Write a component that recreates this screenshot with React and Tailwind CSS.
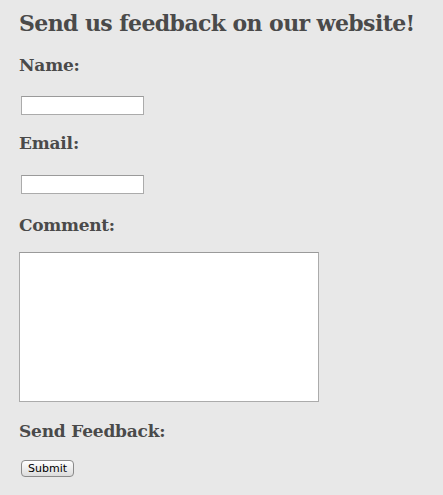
import React from 'react';

const serif = { fontFamily: '"DejaVu Serif", Georgia, serif' };

const App = () => {
    return (
        <div className="w-[443px] h-[495px] bg-[#e8e8e8] pl-[19px] overflow-hidden text-[#4a4a4a]" style={serif}>
            <h1 className="pt-[9px] text-[22px] leading-[28px] font-bold tracking-[-0.6px] whitespace-nowrap">Send us feedback on our website!</h1>

            <div className="mt-[18px] text-[17px] leading-[20px] font-bold tracking-[-0.2px]">Name:</div>
            <input type="text" className="block mt-[21px] ml-[2px] w-[123px] h-[19px] bg-white border border-[#ababab] border-t-[#9a9a9a] outline-none" />

            <div className="mt-[18px] text-[17px] leading-[20px] font-bold tracking-[-0.2px]">Email:</div>
            <input type="text" className="block mt-[22px] ml-[2px] w-[123px] h-[19px] bg-white border border-[#ababab] border-t-[#9a9a9a] outline-none" />

            <div className="mt-[21px] text-[17px] leading-[20px] font-bold tracking-[-0.3px]">Comment:</div>
            <textarea className="block mt-[17px] w-[300px] h-[150px] bg-white border border-[#ababab] border-t-[#9a9a9a] resize-none outline-none" />

            <div className="mt-[19px] text-[17px] leading-[20px] font-bold tracking-[-0.2px]">Send Feedback:</div>
            <button
                type="button"
                className="block mt-[19px] ml-[2px] w-[53px] h-[17px] rounded-[4px] border border-[#8a8a8a] bg-gradient-to-b from-white to-[#dcdcdc] text-[11px] leading-[15px] text-black"
                style={{ fontFamily: '"DejaVu Sans", "Lucida Grande", sans-serif' }}
            >
                Submit
            </button>
        </div>
    );
};

export default App;
